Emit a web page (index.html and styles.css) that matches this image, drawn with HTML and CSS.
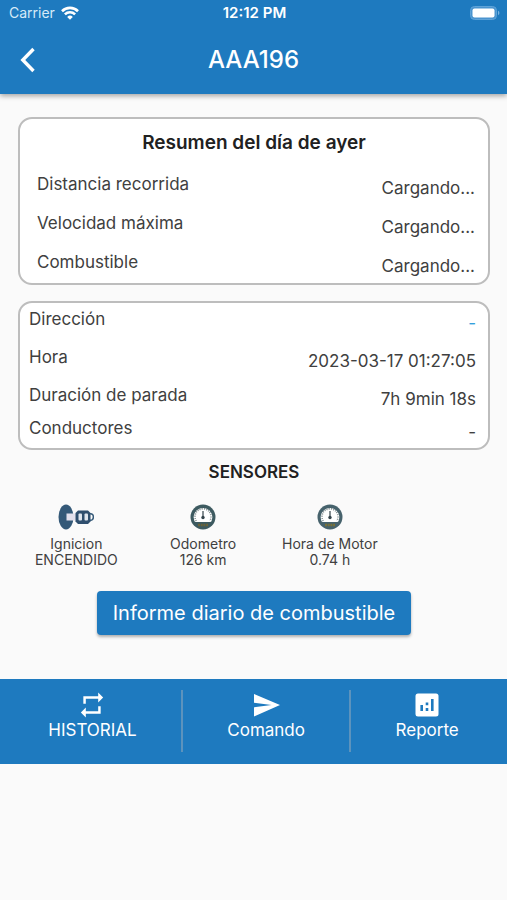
FILE: index.html
```html
<!DOCTYPE html>
<html lang="es">
<head>
    <meta charset="UTF-8">
    <meta name="viewport" content="width=device-width, initial-scale=1.0">
    <title>AAA196</title>
    <link rel="stylesheet" href="styles.css">
</head>
<body>
    <header class="app-header">
        <div class="status-bar">
            <div class="carrier">
                <span>Carrier</span>
                <svg width="18" height="14" viewBox="0 0 18 14" fill="none" stroke="#fff" stroke-width="2.6">
                    <path d="M1 5.2a11.4 11.4 0 0 1 16 0"/>
                    <path d="M3.9 8.4a7.3 7.3 0 0 1 10.2 0"/>
                    <path d="M9 13.8L6.2 10.9a4 4 0 0 1 5.6 0z" fill="#fff" stroke="none"/>
                </svg>
            </div>
            <span class="clock">12:12 PM</span>
            <svg class="battery" width="30" height="14" viewBox="0 0 30 14">
                <rect x="0.5" y="0.5" width="26" height="13" rx="4" fill="#4a94cf" stroke="#5fa3d8"/>
                <rect x="2.5" y="2.5" width="22" height="9" rx="2" fill="#fff"/>
                <path d="M28 4.8a2.4 2.4 0 0 1 0 4.4z" fill="#79b3e0"/>
            </svg>
        </div>
        <div class="title-bar">
            <button class="back" type="button" aria-label="Atrás">
                <svg width="16" height="26" viewBox="0 0 16 26" fill="none" stroke="#fff" stroke-width="3.4">
                    <path d="M13.5 2L2.8 13l10.7 11"/>
                </svg>
            </button>
            <h1>AAA196</h1>
        </div>
    </header>

    <main>
        <section class="card summary">
            <h2>Resumen del día de ayer</h2>
            <dl>
                <div class="row"><dt>Distancia recorrida</dt><dd>Cargando...</dd></div>
                <div class="row"><dt>Velocidad máxima</dt><dd>Cargando...</dd></div>
                <div class="row"><dt>Combustible</dt><dd>Cargando...</dd></div>
            </dl>
        </section>

        <section class="card details">
            <dl>
                <div class="row"><dt>Dirección</dt><dd class="address">-</dd></div>
                <div class="row"><dt>Hora</dt><dd>2023-03-17 01:27:05</dd></div>
                <div class="row"><dt>Duración de parada</dt><dd>7h 9min 18s</dd></div>
                <div class="row compact"><dt>Conductores</dt><dd>-</dd></div>
            </dl>
        </section>

        <h2 class="sensors-title">SENSORES</h2>
        <div class="sensors">
            <div class="sensor">
                <svg width="36" height="26" viewBox="0 0 36 26">
                    <ellipse cx="8" cy="13" rx="7.5" ry="12.5" fill="#345978"/>
                    <rect x="8.5" y="9.5" width="9" height="7" fill="#e2e0ec"/>
                    <path d="M20 6.5h10l2.5 2.5v8.5L30 20H20l-2.5-2.5V9z" fill="#2f4f6e"/>
                    <rect x="20.5" y="9.5" width="3.5" height="7" rx="1" fill="#dfe6ee"/>
                    <rect x="26.5" y="9.5" width="3.5" height="7" rx="1" fill="#dfe6ee"/>
                    <path d="M32 9.8c4.5-.8 4.5 7.2 0 6.4" fill="none" stroke="#345978" stroke-width="1.5"/>
                </svg>
                <span>Ignicion</span>
                <span>ENCENDIDO</span>
            </div>
            <div class="sensor">
                <svg width="26" height="26" viewBox="0 0 26 26">
                    <circle cx="13" cy="13" r="12.5" fill="#3d5a60"/>
                    <path d="M5 18a9.3 9.3 0 1 1 16 0z" fill="#fff"/>
                    <path d="M6.2 17a8 8 0 1 1 13.6 0" fill="none" stroke="#7b8789" stroke-width="1.5" stroke-dasharray="1 1.2"/>
                    <path d="M13 7v6" stroke="#34434a" stroke-width="1.2"/>
                    <circle cx="13" cy="13.5" r="1.7" fill="#34434a"/>
                    <path d="M8 21h10" stroke="#6b6338" stroke-width="2.5" stroke-dasharray="2 .7"/>
                </svg>
                <span>Odometro</span>
                <span>126 km</span>
            </div>
            <div class="sensor">
                <svg width="26" height="26" viewBox="0 0 26 26">
                    <circle cx="13" cy="13" r="12.5" fill="#46626c"/>
                    <path d="M5 18a9.3 9.3 0 1 1 16 0z" fill="#fff"/>
                    <path d="M6.2 17a8 8 0 1 1 13.6 0" fill="none" stroke="#7b8789" stroke-width="1.5" stroke-dasharray="1 1.2"/>
                    <path d="M13 7v6" stroke="#34434a" stroke-width="1.2"/>
                    <circle cx="13" cy="13.5" r="1.7" fill="#34434a"/>
                    <path d="M8 21h10" stroke="#7a7137" stroke-width="2.5" stroke-dasharray="2 .7"/>
                </svg>
                <span>Hora de Motor</span>
                <span>0.74 h</span>
            </div>
        </div>

        <button class="report-button" type="button">Informe diario de combustible</button>
    </main>

    <nav class="bottom-bar">
        <button class="tab" type="button">
            <svg width="26" height="26" viewBox="1.5 1.5 21 21" fill="#fff">
                <path d="M7 7h10v3l4-4-4-4v3H5v6h2V7zm10 10H7v-3l-4 4 4 4v-3h12v-6h-2v4z"/>
            </svg>
            <span>HISTORIAL</span>
        </button>
        <div class="divider"></div>
        <button class="tab" type="button">
            <svg width="28" height="26" viewBox="0 0 28 26" fill="#fff">
                <path d="M2 24.5L28 13 2 2v8.7L19.5 13 2 15.3z"/>
            </svg>
            <span>Comando</span>
        </button>
        <div class="divider"></div>
        <button class="tab" type="button">
            <svg width="30" height="26" viewBox="0 0 30 26">
                <rect x="3.5" y="1.5" width="23" height="23" rx="2.5" fill="#fff"/>
                <path d="M9.7 13v6M15 10.5v2.8M15 16v3M20.3 7v12" stroke="#1e7abf" stroke-width="2.6"/>
            </svg>
            <span>Reporte</span>
        </button>
    </nav>
</body>
</html>
```
FILE: styles.css
```css
* {
    box-sizing: border-box;
}
body {
    margin: 0;
    background: #fafafa;
    color: #404040;
    font-family: Inter, "Liberation Sans", sans-serif;
    font-size: 17px;
    line-height: 20px;
}
h1, h2, dl, dd {
    margin: 0;
}
button {
    border: 0;
    padding: 0;
    background: none;
    color: #fff;
    font: inherit;
    cursor: pointer;
}
svg {
    display: block;
}

/* Header */
.app-header {
    background: #1e7abf;
    color: #fff;
    box-shadow: 0 2px 5px rgba(0, 0, 0, 0.35);
}
.status-bar {
    display: grid;
    grid-template-columns: 1fr auto 1fr;
    align-items: center;
    height: 26px;
    padding: 0 7px 0 9px;
    font-size: 14px;
}
.carrier {
    display: flex;
    align-items: center;
    gap: 6px;
    color: #d6eaf8;
}
.clock {
    font-size: 15px;
    font-weight: 600;
}
.battery {
    justify-self: end;
}
.title-bar {
    display: grid;
    grid-template-columns: 56px 1fr 56px;
    align-items: center;
    height: 68px;
}
.back {
    display: flex;
    justify-content: center;
}
.title-bar h1 {
    text-align: center;
    font-size: 24px;
    font-weight: 500;
    line-height: 28px;
}

/* Cards */
main {
    padding: 23px 17px 44px 18px;
}
.card {
    border: 2px solid #bdbdbd;
    border-radius: 14px;
    background: #fff;
}
.card + .card {
    margin-top: 16px;
}
.summary {
    padding: 14px 0 7px;
}
.summary h2 {
    margin-bottom: 21px;
    text-align: center;
    font-size: 19px;
    font-weight: 600;
    color: #212121;
}
.summary dl {
    padding: 0 13px 0 17px;
}
.row {
    display: flex;
    justify-content: space-between;
}
.row + .row {
    margin-top: 15px;
}
.row dd {
    padding-top: 4px;
}
.details {
    padding: 6px 12px 6px 9px;
}
.details .row + .row {
    margin-top: 14px;
}
.details .row + .compact {
    margin-top: 9px;
}
.row .address {
    color: #35a0dc;
}

/* Sensors */
.sensors-title {
    margin: 12px 0 22px;
    text-align: center;
    font-size: 17px;
    font-weight: 600;
    color: #212121;
}
.sensors {
    display: grid;
    grid-template-columns: repeat(3, 25vw);
    margin-left: -5px;
}
.sensor {
    display: flex;
    flex-direction: column;
    align-items: center;
    font-size: 14px;
    line-height: 16px;
}
.sensor svg {
    margin-bottom: 6px;
}
.report-button {
    display: block;
    margin: 23px auto 0;
    padding: 10px 16px;
    border-radius: 4px;
    background: #1e7abf;
    font-size: 20px;
    line-height: 24px;
    box-shadow: 0 2px 3px rgba(0, 0, 0, 0.3);
}

/* Bottom bar */
.bottom-bar {
    display: flex;
    justify-content: space-evenly;
    padding: 11px 4px 12px;
    background: #1e7abf;
}
.tab {
    display: flex;
    flex-direction: column;
    align-items: center;
    padding: 2px 0;
}
.tab span {
    margin-top: 2px;
}
.divider {
    width: 2px;
    height: 62px;
    background: #5c93bd;
}
```
